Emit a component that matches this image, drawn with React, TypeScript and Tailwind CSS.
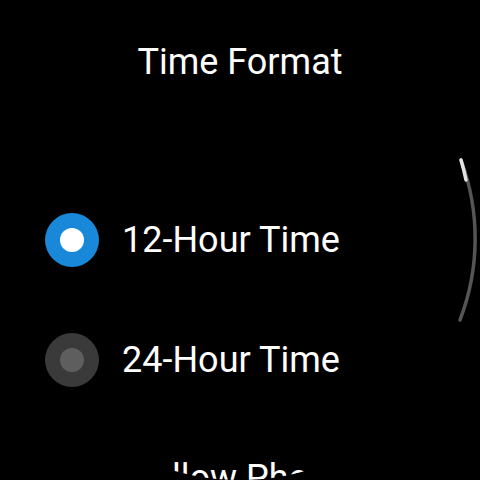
export default function App() {
  return (
    <div className="relative w-[480px] h-[480px] bg-black overflow-hidden" style={{ fontFamily: "Roboto, 'Noto Sans', sans-serif" }}>
      <div className="w-[480px] h-[480px] rounded-full overflow-hidden flex flex-col items-center">
        <div className="mt-[40px] text-[36px] leading-[44px] text-white">Time Format</div>

        <div className="mt-[129px] w-full flex flex-col gap-[66px] pl-[45px]">
          <div className="flex items-center gap-[23px] h-[54px]">
            <div className="w-[54px] h-[54px] rounded-full bg-[#1a88d8] flex items-center justify-center">
              <div className="w-[24px] h-[24px] rounded-full bg-white" />
            </div>
            <span className="text-[36px] text-white">12-Hour Time</span>
          </div>
          <div className="flex items-center gap-[23px] h-[54px]">
            <div className="w-[54px] h-[54px] rounded-full bg-[#3a3a3a] flex items-center justify-center">
              <div className="w-[24px] h-[24px] rounded-full bg-[#5e5e5e]" />
            </div>
            <span className="text-[36px] text-white">24-Hour Time</span>
          </div>
        </div>

        <div className="mt-[64px] text-[36px] text-white whitespace-nowrap">Follow Phone</div>
      </div>

      {/* scroll indicator */}
      <svg className="absolute left-0 top-0" width="480" height="480" viewBox="0 0 480 480">
        <path d="M 461 160 A 226 226 0 0 1 460 320" fill="none" stroke="#555555" strokeWidth="3.5" strokeLinecap="round" />
        <path d="M 461 160 A 226 226 0 0 1 466 180" fill="none" stroke="#e4e4e4" strokeWidth="3.5" strokeLinecap="round" />
      </svg>
    </div>
  );
}
